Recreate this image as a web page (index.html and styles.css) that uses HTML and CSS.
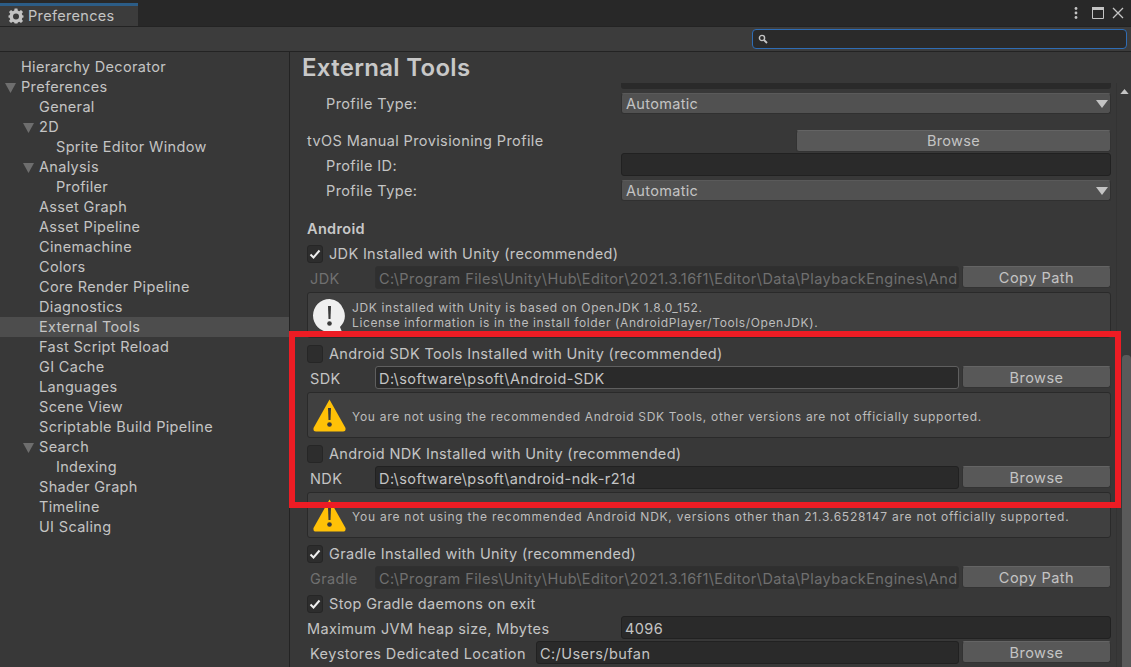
FILE: index.html
```html
<!DOCTYPE html>
<html lang="en">
<head>
    <meta charset="UTF-8">
    <meta name="viewport" content="width=device-width, initial-scale=1.0">
    <title>Preferences</title>
    <link rel="stylesheet" href="styles.css">
</head>
<body>
    <svg class="defs" width="0" height="0">
        <symbol id="warn" viewBox="0 0 33 33">
            <path d="M16.5 0.5 L32.5 29 Q33 32.500 30 32.500 L3 32.500 Q0 32.500 0.500 29 Z" fill="#ffc107"/>
            <path d="M15 9 H18 L17.500 21 H15.500 Z" fill="#3a3a3a"/>
            <circle cx="16.500" cy="25.500" r="2.300" fill="#3a3a3a"/>
        </symbol>
        <symbol id="tick" viewBox="0 0 12 12">
            <path d="M1.500 6.500 L4.500 9.500 L10.500 2.500" fill="none" stroke="#eeeeee" stroke-width="2"/>
        </symbol>
        <symbol id="down" viewBox="0 0 12 8">
            <path d="M0 0 H12 L6 8 Z" fill="#c4c4c4"/>
        </symbol>
        <symbol id="fold" viewBox="0 0 11 10">
            <path d="M0 0 H11 L5.500 10 Z" fill="#6e6e6e"/>
        </symbol>
    </svg>

    <div class="window">
        <div class="tabbar">
            <div class="tab">
                <svg class="gear" viewBox="0 0 16 16">
                    <path fill="#c4c4c4" fill-rule="evenodd" d="M6.600 0.500 H9.400 L9.800 2.600 L11.200 3.200 L13 2 L15 4 L13.800 5.800 L14.400 7.200 L15.500 7.500 V9.500 L14.400 9.800 L13.800 11.200 L15 13 L13 15 L11.200 13.800 L9.800 14.400 L9.400 15.500 H6.600 L6.200 14.400 L4.800 13.800 L3 15 L1 13 L2.200 11.200 L1.600 9.800 L0.500 9.500 V7.500 L1.600 7.200 L2.200 5.800 L1 4 L3 2 L4.800 3.200 L6.200 2.600 Z M8 5.500 A3 3 0 1 0 8 11.500 A3 3 0 1 0 8 5.500 Z"/>
                </svg>
                <span class="tab-text">Preferences</span>
            </div>
            <div class="tab-actions">
                <svg class="kebab" viewBox="0 0 4 12"><circle cx="2" cy="1.500" r="1.400"/><circle cx="2" cy="6" r="1.400"/><circle cx="2" cy="10.500" r="1.400"/></svg>
                <svg class="maximize" viewBox="0 0 12 12"><path d="M0.500 0.500 H11.500 V11.500 H0.500 Z" fill="none" stroke="#c4c4c4"/><path d="M0 0 H12 V3 H0 Z" fill="#c4c4c4"/></svg>
                <svg class="close" viewBox="0 0 12 12"><path d="M1 1 L11 11 M11 1 L1 11" stroke="#c4c4c4" stroke-width="1.300"/></svg>
            </div>
        </div>

        <div class="toolbar">
            <div class="search">
                <svg class="search-icon" viewBox="0 0 10 10"><circle cx="4" cy="4" r="2.600" fill="none" stroke="#c4c4c4" stroke-width="1.400"/><path d="M6 6 L9 9" stroke="#c4c4c4" stroke-width="1.800"/></svg>
            </div>
        </div>

        <div class="main">
            <div class="sidebar">
                <div class="tree-item lvl1">Hierarchy Decorator</div>
                <div class="tree-item lvl1"><svg class="fold fold1"><use href="#fold"/></svg>Preferences</div>
                <div class="tree-item lvl2">General</div>
                <div class="tree-item lvl2"><svg class="fold fold2"><use href="#fold"/></svg>2D</div>
                <div class="tree-item lvl3">Sprite Editor Window</div>
                <div class="tree-item lvl2"><svg class="fold fold2"><use href="#fold"/></svg>Analysis</div>
                <div class="tree-item lvl3">Profiler</div>
                <div class="tree-item lvl2">Asset Graph</div>
                <div class="tree-item lvl2">Asset Pipeline</div>
                <div class="tree-item lvl2">Cinemachine</div>
                <div class="tree-item lvl2">Colors</div>
                <div class="tree-item lvl2">Core Render Pipeline</div>
                <div class="tree-item lvl2">Diagnostics</div>
                <div class="tree-item lvl2 selected">External Tools</div>
                <div class="tree-item lvl2">Fast Script Reload</div>
                <div class="tree-item lvl2">GI Cache</div>
                <div class="tree-item lvl2">Languages</div>
                <div class="tree-item lvl2">Scene View</div>
                <div class="tree-item lvl2">Scriptable Build Pipeline</div>
                <div class="tree-item lvl2"><svg class="fold fold2"><use href="#fold"/></svg>Search</div>
                <div class="tree-item lvl3">Indexing</div>
                <div class="tree-item lvl2">Shader Graph</div>
                <div class="tree-item lvl2">Timeline</div>
                <div class="tree-item lvl2">UI Scaling</div>
            </div>

            <div class="panel">
                <h1 class="title">External Tools</h1>
                <div class="scroller">
                    <div class="form">
                        <div class="cut-field"></div>
                        <div class="row">
                            <span class="label indent">Profile Type:</span>
                            <div class="dropdown">Automatic<svg class="arrow"><use href="#down"/></svg></div>
                        </div>
                        <div class="row gap-top">
                            <span class="label tvos">tvOS Manual Provisioning Profile</span>
                            <div class="button">Browse</div>
                        </div>
                        <div class="row">
                            <span class="label indent">Profile ID:</span>
                            <div class="input"></div>
                        </div>
                        <div class="row">
                            <span class="label indent">Profile Type:</span>
                            <div class="dropdown">Automatic<svg class="arrow"><use href="#down"/></svg></div>
                        </div>

                        <div class="row section">Android</div>

                        <div class="row">
                            <span class="checkbox"><svg class="tick"><use href="#tick"/></svg></span>
                            <span class="check-label">JDK Installed with Unity (recommended)</span>
                        </div>
                        <div class="row">
                            <span class="label short muted">JDK</span>
                            <div class="input disabled">C:\Program Files\Unity\Hub\Editor\2021.3.16f1\Editor\Data\PlaybackEngines\Andr</div>
                            <div class="button side">Copy Path</div>
                        </div>
                        <div class="help">
                            <svg class="help-icon" viewBox="0 0 33 33">
                                <path d="M16.500 0 A16.500 16.500 0 1 0 16.500 33 L29 33 L27 28 A16.500 16.500 0 0 0 16.500 0 Z" fill="#efefef"/>
                                <path d="M15 7 H18 L17.500 20 H15.500 Z" fill="#3a3a3a"/>
                                <circle cx="16.500" cy="24.500" r="2.300" fill="#3a3a3a"/>
                            </svg>
                            <p class="info-text">JDK installed with Unity is based on OpenJDK 1.8.0_152.<br>License information is in the install folder (AndroidPlayer/Tools/OpenJDK).</p>
                        </div>

                        <div class="row">
                            <span class="checkbox"></span>
                            <span class="check-label">Android SDK Tools Installed with Unity (recommended)</span>
                        </div>
                        <div class="row">
                            <span class="label short">SDK</span>
                            <div class="input active">D:\software\psoft\Android-SDK</div>
                            <div class="button side">Browse</div>
                        </div>
                        <div class="help">
                            <svg class="help-icon"><use href="#warn"/></svg>
                            <p class="warn-text warn-sdk">You are not using the recommended Android SDK Tools, other versions are not officially supported.</p>
                        </div>

                        <div class="row">
                            <span class="checkbox"></span>
                            <span class="check-label">Android NDK Installed with Unity (recommended)</span>
                        </div>
                        <div class="row">
                            <span class="label short">NDK</span>
                            <div class="input">D:\software\psoft\android-ndk-r21d</div>
                            <div class="button side">Browse</div>
                        </div>
                        <div class="help">
                            <svg class="help-icon"><use href="#warn"/></svg>
                            <p class="warn-text warn-ndk">You are not using the recommended Android NDK, versions other than 21.3.6528147 are not officially supported.</p>
                        </div>

                        <div class="row">
                            <span class="checkbox"><svg class="tick"><use href="#tick"/></svg></span>
                            <span class="check-label">Gradle Installed with Unity (recommended)</span>
                        </div>
                        <div class="row">
                            <span class="label short muted">Gradle</span>
                            <div class="input disabled">C:\Program Files\Unity\Hub\Editor\2021.3.16f1\Editor\Data\PlaybackEngines\Andr</div>
                            <div class="button side">Copy Path</div>
                        </div>
                        <div class="row">
                            <span class="checkbox"><svg class="tick"><use href="#tick"/></svg></span>
                            <span class="check-label">Stop Gradle daemons on exit</span>
                        </div>
                        <div class="row">
                            <span class="label wide">Maximum JVM heap size, Mbytes</span>
                            <div class="input">4096</div>
                        </div>
                        <div class="row">
                            <span class="label keystore">Keystores Dedicated Location</span>
                            <div class="input">C:/Users/bufan</div>
                            <div class="button side">Browse</div>
                        </div>
                    </div>
                    <div class="scrollbar">
                        <svg class="scroll-up" viewBox="0 0 10 6"><path d="M5 0 L10 6 H0 Z" fill="#c4c4c4"/></svg>
                        <div class="thumb"></div>
                    </div>
                </div>
            </div>
        </div>

        <div class="highlight"></div>
    </div>
</body>
</html>
```

FILE: styles.css
```css
*{
    padding: 0px;
    margin: 0px;
    box-sizing: border-box;
}
body{
    background-color: #383838;
    color: #c4c4c4;
    font-family: Inter, "Liberation Sans", sans-serif;
    font-size: 14.5px;
    letter-spacing: 0.33px;
    overflow: hidden;
}
.defs{
    position: absolute;
}
.window{
    position: relative;
    width: 1131px;
    height: 667px;
    display: flex;
    flex-direction: column;
    overflow: hidden;
}

/* top tab strip */
.tabbar{
    height: 26px;
    background-color: #282828;
    display: flex;
    justify-content: space-between;
    align-items: flex-end;
    flex-shrink: 0;
}
.tab{
    width: 138px;
    height: 23px;
    background-color: #3c3c3c;
    border-top: 3px solid #2c5d87;
    display: flex;
    align-items: center;
    padding-left: 8px;
    gap: 4px;
}
.tab-text{
    position: relative;
    top: -1px;
}
.gear{
    width: 16px;
    height: 16px;
}
.tab-actions{
    display: flex;
    align-items: center;
    height: 26px;
    padding-right: 7px;
}
.kebab{
    width: 4px;
    height: 12px;
    fill: #c4c4c4;
    margin-right: 14px;
}
.maximize{
    width: 12px;
    height: 12px;
    margin-right: 8px;
}
.close{
    width: 12px;
    height: 12px;
}

.toolbar{
    height: 26px;
    background-color: #3c3c3c;
    border-bottom: 1px solid #232323;
    border-top: 1px solid #232323;
    display: flex;
    justify-content: flex-end;
    align-items: center;
    padding-right: 4px;
    flex-shrink: 0;
}
.search{
    width: 375px;
    height: 20px;
    background-color: #2a2a2a;
    border: 1px solid #2f6db5;
    border-radius: 4px;
    display: flex;
    align-items: center;
    padding-left: 5px;
}
.search-icon{
    width: 10px;
    height: 10px;
}

.main{
    flex: 1;
    display: flex;
    min-height: 0;
}

/* left tree */
.sidebar{
    width: 290px;
    flex-shrink: 0;
    border-right: 1px solid #232323;
    padding-top: 5px;
}
.tree-item{
    height: 20px;
    line-height: 20px;
    position: relative;
    white-space: nowrap;
}
.tree-item.selected{
    background-color: #4d4d4d;
}
.lvl1{
    padding-left: 21px;
}
.lvl2{
    padding-left: 39px;
}
.lvl3{
    padding-left: 56px;
}
.fold{
    position: absolute;
    top: 6px;
    width: 11px;
    height: 10px;
}
.fold1{
    left: 5px;
}
.fold2{
    left: 23px;
}

/* right side */
.panel{
    flex: 1;
    min-width: 0;
    display: flex;
    flex-direction: column;
}
.title{
    height: 31px;
    padding-left: 12px;
    padding-top: 1px;
    font-size: 24px;
    font-weight: 600;
    letter-spacing: 0.3px;
    line-height: 29px;
    color: #c8c8c8;
    flex-shrink: 0;
}
.scroller{
    flex: 1;
    min-height: 0;
    display: flex;
    overflow: hidden;
}
.form{
    width: 826px;
    padding-left: 17px;
    padding-right: 5px;
}
.cut-field{
    height: 6px;
    margin-left: 314px;
    background-color: #2a2a2a;
    border-radius: 0 0 3px 3px;
    margin-bottom: 2px;
}
.row{
    height: 25px;
    display: flex;
    align-items: center;
    white-space: nowrap;
}
.gap-top{
    margin-top: 12px;
}
.section{
    margin-top: 13px;
    font-weight: 600;
    color: #c8c8c8;
}
.label{
    flex-shrink: 0;
    letter-spacing: 0.4px;
}
.indent{
    width: 314px;
    padding-left: 19px;
}
.tvos{
    width: 489px;
}
.short{
    width: 68px;
    padding-left: 3px;
}
.wide{
    width: 314px;
}
.keystore{
    width: 229px;
    padding-left: 3px;
}
.muted{
    color: #707070;
}
.checkbox{
    width: 16px;
    height: 18px;
    background-color: #2d2d2d;
    border: 1px solid #262626;
    border-radius: 3px;
    margin-right: 6px;
    display: flex;
    align-items: center;
    justify-content: center;
    flex-shrink: 0;
}
.tick{
    width: 12px;
    height: 12px;
}
.input{
    flex: 1;
    min-width: 0;
    height: 23px;
    line-height: 23px;
    letter-spacing: 0.42px;
    background-color: #2a2a2a;
    border: 1px solid #212121;
    border-radius: 3px;
    padding-left: 3px;
    margin-bottom: 2px;
    overflow: hidden;
}
.input.active{
    border-color: #5f5f5f;
}
.input.disabled{
    background-color: #2f2f2f;
    border-color: #303030;
    color: #707070;
}
.dropdown{
    flex: 1;
    height: 21px;
    line-height: 19px;
    background-color: #515151;
    border: 1px solid #303030;
    border-top-color: #5a5a5a;
    border-radius: 3px;
    padding-left: 4px;
    position: relative;
}
.arrow{
    position: absolute;
    right: 2px;
    top: 6px;
    width: 12px;
    height: 8px;
}
.button{
    flex: 1;
    height: 22px;
    line-height: 20px;
    text-align: center;
    background-color: #585858;
    border: 1px solid #333333;
    border-top-color: #646464;
    border-radius: 3px;
}
.button.side{
    flex: 0 0 149px;
    margin-left: 3px;
    margin-bottom: 3px;
    line-height: 22px;
    letter-spacing: 0.5px;
}
.help{
    height: 46px;
    margin: 1px 0 3px;
    background-color: #404040;
    border: 1px solid #2a2a2a;
    border-radius: 3px;
    display: flex;
    align-items: center;
    padding-left: 5px;
    font-size: 12px;
    line-height: 15px;
    color: #bdbdbd;
    white-space: nowrap;
    overflow: hidden;
}
.info-text{
    letter-spacing: 0.62px;
}
.warn-text{
    padding-top: 2px;
}
.warn-sdk{
    letter-spacing: 0.7px;
}
.warn-ndk{
    letter-spacing: 0.75px;
}
.help-icon{
    width: 33px;
    height: 33px;
    margin-right: 6px;
    flex-shrink: 0;
}
.scrollbar{
    flex: 1;
    position: relative;
    background-color: #383838;
    border-left: 1px solid #333333;
}
.scroll-up{
    position: absolute;
    top: 6px;
    left: 3px;
    width: 9px;
    height: 5px;
}
.thumb{
    position: absolute;
    top: 272px;
    left: 5px;
    width: 9px;
    bottom: 0;
    background-color: #5a5a5a;
    border-radius: 4px 4px 0 0;
}

/* red annotation drawn over the screenshot */
.highlight{
    position: absolute;
    left: 289px;
    top: 331px;
    width: 832px;
    height: 177px;
    border: 6px solid #ed1c24;
    pointer-events: none;
}
```
